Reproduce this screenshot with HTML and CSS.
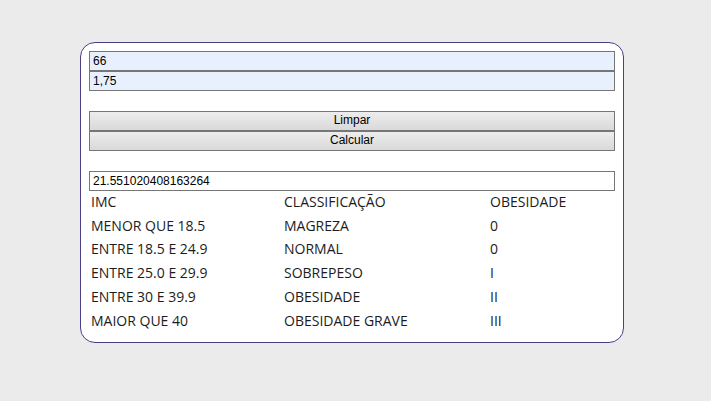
FILE: index.html
```html
<!DOCTYPE html>
<html lang="pt">
<head>
<meta charset="utf-8">
<title>IMC</title>
<link rel="stylesheet" href="styles.css">
</head>
<body>
<div class="card">
  <div class="group">
    <input class="field auto" type="text" value="66">
    <input class="field auto" type="text" value="1,75">
  </div>
  <div class="group buttons">
    <button class="btn">Limpar</button>
    <button class="btn">Calcular</button>
  </div>
  <div class="group">
    <input class="field" type="text" value="21.551020408163264">
  </div>
  <div class="table">
    <div>IMC</div><div>CLASSIFICAÇÃO</div><div>OBESIDADE</div>
    <div>MENOR QUE 18.5</div><div>MAGREZA</div><div>0</div>
    <div>ENTRE 18.5 E 24.9</div><div>NORMAL</div><div>0</div>
    <div>ENTRE 25.0 E 29.9</div><div>SOBREPESO</div><div>I</div>
    <div>ENTRE 30 E 39.9</div><div>OBESIDADE</div><div>II</div>
    <div>MAIOR QUE 40</div><div>OBESIDADE GRAVE</div><div>III</div>
  </div>
</div>
</body>
</html>
```
FILE: styles.css
```css
html, body {
  margin: 0;
  padding: 0;
  background: #ebebeb;
}
body {
  padding-top: 42px;
  font-family: "Liberation Sans", Arial, sans-serif;
}
.card {
  box-sizing: border-box;
  width: 544px;
  height: 301px;
  margin-left: 80px;
  background: #fff;
  border: 1px solid #4a3f86;
  border-radius: 15px;
  padding: 8px 8px 7px 8px;
  display: flex;
  flex-direction: column;
}
.group {
  display: flex;
  flex-direction: column;
}
.buttons {
  margin-top: 20px;
}
.buttons + .group {
  margin-top: 20px;
}
.field {
  box-sizing: border-box;
  width: 100%;
  height: 20px;
  margin: 0;
  border: 1px solid #767676;
  padding: 0 3px;
  font-family: "Liberation Sans", Arial, sans-serif;
  font-size: 12px;
  color: #000;
  background: #fff;
  outline: none;
}
.field.auto {
  background: #e8f0fe;
}
.btn {
  box-sizing: border-box;
  width: 100%;
  height: 20px;
  margin: 0;
  padding: 0 0 2px 0;
  border: 1px solid #767676;
  background: linear-gradient(#ededed, #d9d9d9);
  font-family: "Liberation Sans", Arial, sans-serif;
  font-size: 12px;
  line-height: 15px;
  color: #000;
}
.table {
  display: grid;
  grid-template-columns: 193px 206px 1fr;
  grid-auto-rows: 23.8px;
  margin-top: -1px;
  padding-left: 2px;
  font-family: "Open Sans", sans-serif;
  font-size: 14px;
  line-height: 18px;
  color: #1c1c1c;
}
.table > div {
  display: flex;
  align-items: center;
  white-space: nowrap;
}
```
